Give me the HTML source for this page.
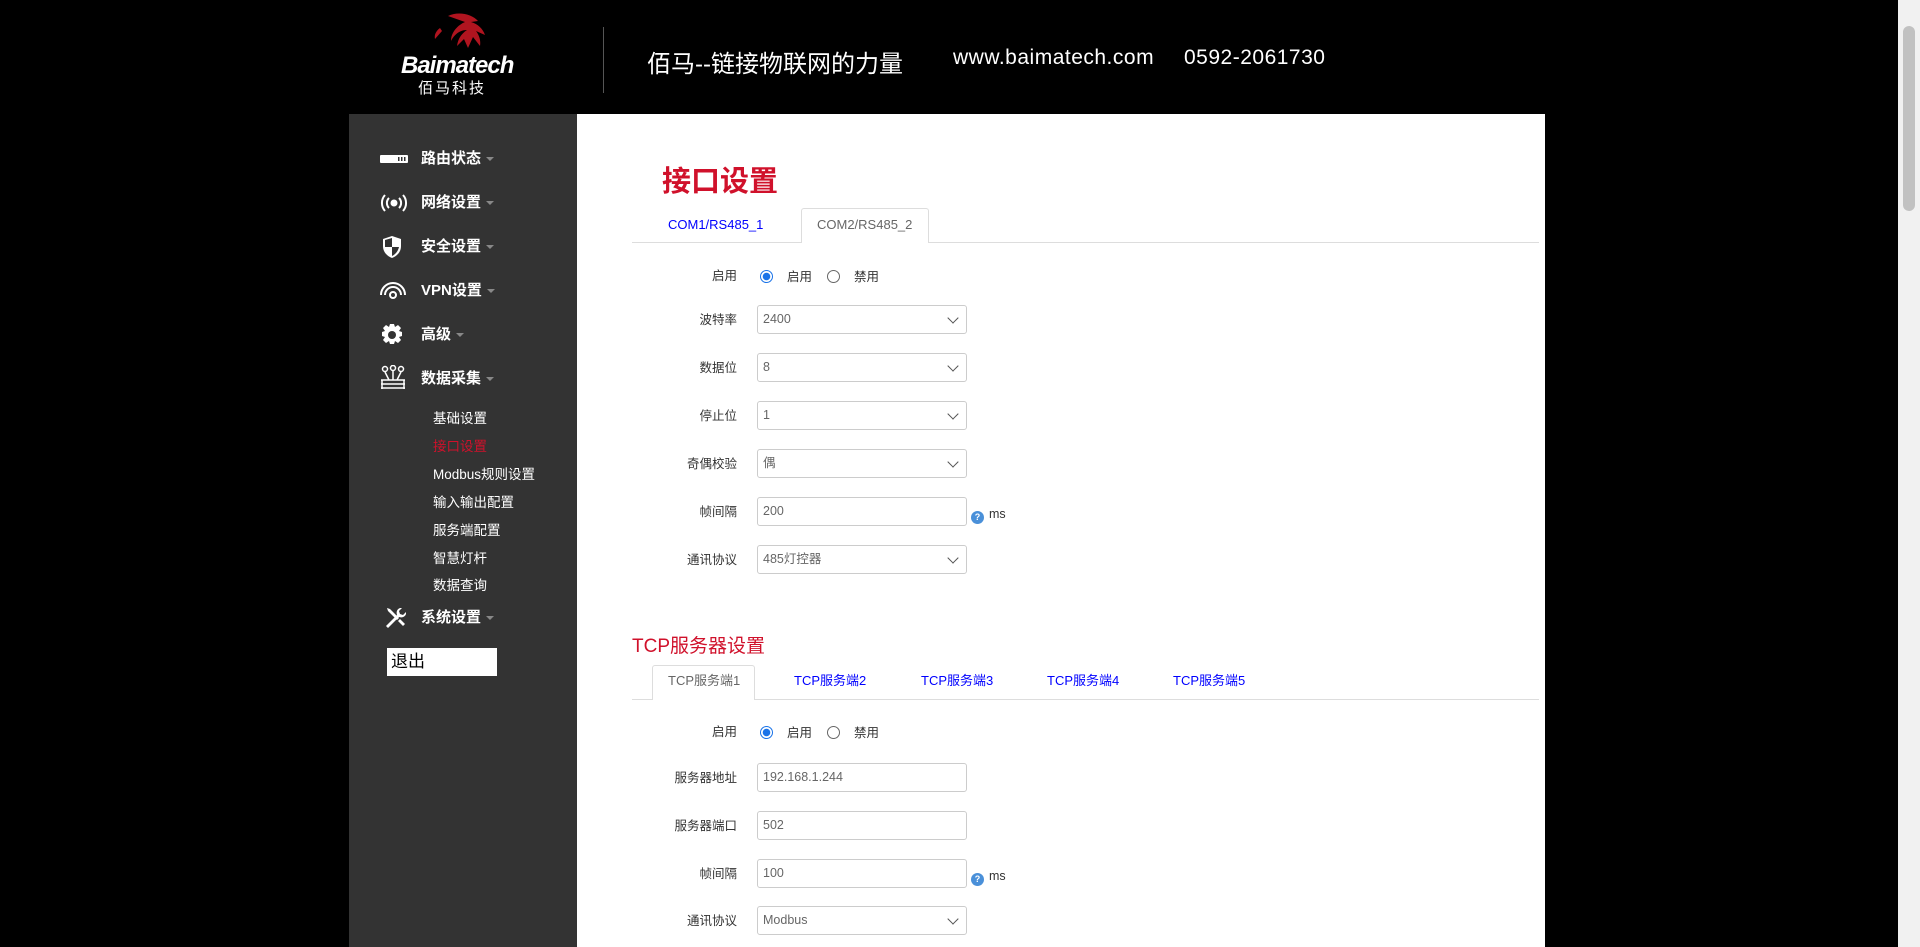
<!DOCTYPE html>
<html><head><meta charset="utf-8"><style>
*{margin:0;padding:0;box-sizing:border-box}
body{width:1920px;height:947px;background:#000;position:relative;overflow:hidden;font-family:"Liberation Sans","Noto Sans CJK SC",sans-serif}
.a{position:absolute;white-space:nowrap}
#side{position:absolute;left:349px;top:114px;width:228px;height:833px;background:#333}
#main{position:absolute;left:577px;top:114px;width:968px;height:833px;background:#fff}
.mi{position:absolute;left:421px;color:#fff;font-weight:bold;font-size:15px;line-height:20px}
.mi:after{content:"";display:inline-block;margin-left:5px;vertical-align:middle;border-left:4px solid transparent;border-right:4px solid transparent;border-top:4px solid #888}
.ic{position:absolute;left:380px}
.sub{position:absolute;left:433px;color:#fff;font-size:13.5px;line-height:18px}
.lbl{position:absolute;right:1183px;font-size:12.5px;color:#333;line-height:16px}
.inp{position:absolute;left:757px;width:210px;height:29px;border:1px solid #ccc;border-radius:3px;font-size:12.5px;color:#666;padding-left:5px;line-height:27px}
.sel:after{content:"";position:absolute;right:9px;top:8px;width:7px;height:7px;border-right:1.8px solid #555;border-bottom:1.8px solid #555;transform:rotate(45deg)}
.rad{position:absolute;left:760px;font-size:12.5px;color:#333;line-height:16px}
.r{display:inline-block;width:13px;height:13px;border-radius:50%;border:1px solid #666;vertical-align:-2px;margin-right:14px}
.r.on{border:1.5px solid #1a73e8;background:radial-gradient(circle,#1a73e8 0 3.5px,#fff 4px)}
.g{display:inline-block;width:15px}
.hint{position:absolute;left:971px;font-size:12.5px;color:#333;line-height:16px}
.q{display:inline-block;width:13px;height:13px;border-radius:50%;background:#4a90d9;color:#fff;font-size:9px;text-align:center;line-height:13px;font-weight:bold;vertical-align:-2px;margin-right:5px}
.tl{position:absolute;font-size:13px;color:#00f;line-height:16px}
</style></head><body>
<!-- header -->
<svg class="a" style="left:418px;top:12px" width="90" height="44" viewBox="0 0 90 44"><path d="M30 4c10-5 24-2 30 5l-7 1c7 2 12 7 14 13l-9-4c3 4 5 9 4 15l-7-9-5 11-4-9-7 7c1-7 4-12 10-16-9 0-14 7-16 11 0-9 7-16 14-19z" fill="#b0141f"/><path d="M22 16c-4 3-6 7-5 11l7-8z" fill="#b0141f"/></svg>
<div class="a" style="left:401px;top:52px;color:#fff;font-size:24px;font-style:italic;font-weight:bold;letter-spacing:-1px">Baimatech</div>
<div class="a" style="left:418px;top:77px;color:#fff;font-size:15px;letter-spacing:2px">佰马科技</div>
<div class="a" style="left:603px;top:27px;width:1px;height:66px;background:#555"></div>
<div class="a" style="left:647px;top:44px;color:#fff;font-size:24px">佰马--链接物联网的力量</div>
<div class="a" style="left:953px;top:46px;color:#fff;font-size:21px;letter-spacing:0.5px">www.baimatech.com</div>
<div class="a" style="left:1184px;top:46px;color:#fff;font-size:21px;letter-spacing:0.5px">0592-2061730</div>
<div class="a" style="left:1898px;top:0;width:22px;height:947px;background:#f1f1f1"></div>
<div class="a" style="left:1903px;top:26px;width:12px;height:185px;background:#c1c1c1;border-radius:6px"></div>
<div id="side"></div>
<div id="main"></div>
<!-- sidebar -->
<svg class="ic" style="top:154px" width="28" height="10"><rect x="0" y="1" width="28" height="8" rx="1" fill="#fff"/><rect x="18" y="3" width="1.5" height="4" fill="#333"/><rect x="21" y="3" width="1.5" height="4" fill="#333"/><rect x="24" y="3" width="1.5" height="4" fill="#333"/></svg>
<div class="mi" style="top:149px">路由状态</div>
<svg class="ic" style="top:194px" width="28" height="18" fill="none" stroke="#fff" stroke-width="2"><circle cx="14" cy="9" r="2.5" fill="#fff"/><path d="M9 4a7 7 0 0 0 0 10M19 4a7 7 0 0 1 0 10M5 1a12 12 0 0 0 0 16M23 1a12 12 0 0 1 0 16"/></svg>
<div class="mi" style="top:193px">网络设置</div>
<svg class="ic" style="top:235px" width="24" height="24"><path d="M12 1l9 3v7c0 6-4 10-9 12C7 21 3 17 3 11V4z" fill="#fff"/><path d="M12 3v9H5V5zM12 12h7c-1 4-3 7-7 9z" fill="#333"/></svg>
<div class="mi" style="top:237px">安全设置</div>
<svg class="ic" style="top:281px" width="26" height="20" fill="none" stroke="#fff" stroke-width="2"><circle cx="13" cy="14" r="3"/><path d="M5 14a8 8 0 0 1 16 0M1 14a12 12 0 0 1 24 0"/></svg>
<div class="mi" style="top:281px">VPN设置</div>
<svg class="ic" style="top:323px" width="24" height="24" viewBox="0 0 24 24"><path fill="#fff" d="M10 1h4l1 3 3-2 3 3-2 3 3 1v4l-3 1 2 3-3 3-3-2-1 3h-4l-1-3-3 2-3-3 2-3-3-1v-4l3-1-2-3 3-3 3 2z"/><circle cx="12" cy="12" r="4" fill="#333"/></svg>
<div class="mi" style="top:325px">高级</div>
<svg class="ic" style="top:365px" width="26" height="26" fill="none" stroke="#fff" stroke-width="1.5"><circle cx="5" cy="4" r="2.5"/><circle cx="13" cy="3" r="2.5"/><circle cx="21" cy="4" r="2.5"/><path d="M5 7l4 8M13 6v9M21 7l-4 8M1 15h24M1 19h24M1 23h24M2 15v9M24 15v9"/></svg>
<div class="mi" style="top:369px">数据采集</div>
<div class="sub" style="top:410px">基础设置</div>
<div class="sub" style="top:438px;color:#d0112b">接口设置</div>
<div class="sub" style="top:466px">Modbus规则设置</div>
<div class="sub" style="top:494px">输入输出配置</div>
<div class="sub" style="top:522px">服务端配置</div>
<div class="sub" style="top:550px">智慧灯杆</div>
<div class="sub" style="top:577px">数据查询</div>
<svg class="ic" style="top:606px;left:383px" width="24" height="24" viewBox="0 0 24 24" fill="#fff"><path d="M3 20l11-11c-1-3 0-6 3-7l2 0-3 3 1 3 3 1 3-3 0 2c-1 3-4 4-7 3L5 22z"/><path d="M4 2l3 1 9 9-2 2-9-9z"/><path d="M15 15l2-2 5 5-2 2z"/></svg>
<div class="mi" style="top:608px">系统设置</div>
<div class="a" style="left:387px;top:648px;width:110px;height:28px;background:#fff;color:#000;font-size:17px;line-height:28px;padding-left:4px">退出</div>
<!-- content -->
<div class="a" style="left:662px;top:158px;color:#d0112b;font-size:29px;font-weight:bold">接口设置</div>
<div class="a" style="left:632px;top:242px;width:907px;height:1px;background:#ddd"></div>
<div class="a" style="left:801px;top:208px;width:128px;height:35px;background:#fff;border:1px solid #ddd;border-bottom:none;border-radius:3px 3px 0 0"></div>
<div class="tl" style="left:668px;top:217px">COM1/RS485_1</div>
<div class="tl" style="left:817px;top:217px;color:#666">COM2/RS485_2</div>
<div class="lbl" style="top:268px">启用</div>
<div class="rad" style="top:269px"><span class="r on"></span>启用<span class="g"></span><span class="r"></span>禁用</div>
<div class="lbl" style="top:312px">波特率</div><div class="inp sel" style="top:305px">2400</div>
<div class="lbl" style="top:360px">数据位</div><div class="inp sel" style="top:353px">8</div>
<div class="lbl" style="top:408px">停止位</div><div class="inp sel" style="top:401px">1</div>
<div class="lbl" style="top:456px">奇偶校验</div><div class="inp sel" style="top:449px">偶</div>
<div class="lbl" style="top:504px">帧间隔</div><div class="inp" style="top:497px">200</div><div class="hint" style="top:506px"><span class="q">?</span>ms</div>
<div class="lbl" style="top:552px">通讯协议</div><div class="inp sel" style="top:545px">485灯控器</div>
<div class="a" style="left:632px;top:631px;color:#d0112b;font-size:19px">TCP服务器设置</div>
<div class="a" style="left:632px;top:699px;width:907px;height:1px;background:#ddd"></div>
<div class="a" style="left:652px;top:665px;width:103px;height:35px;background:#fff;border:1px solid #ddd;border-bottom:none;border-radius:3px 3px 0 0"></div>
<div class="tl" style="left:668px;top:673px;color:#666">TCP服务端1</div>
<div class="tl" style="left:794px;top:673px">TCP服务端2</div>
<div class="tl" style="left:921px;top:673px">TCP服务端3</div>
<div class="tl" style="left:1047px;top:673px">TCP服务端4</div>
<div class="tl" style="left:1173px;top:673px">TCP服务端5</div>
<div class="lbl" style="top:724px">启用</div>
<div class="rad" style="top:725px"><span class="r on"></span>启用<span class="g"></span><span class="r"></span>禁用</div>
<div class="lbl" style="top:770px">服务器地址</div><div class="inp" style="top:763px">192.168.1.244</div>
<div class="lbl" style="top:818px">服务器端口</div><div class="inp" style="top:811px">502</div>
<div class="lbl" style="top:866px">帧间隔</div><div class="inp" style="top:859px">100</div><div class="hint" style="top:868px"><span class="q">?</span>ms</div>
<div class="lbl" style="top:913px">通讯协议</div><div class="inp sel" style="top:906px">Modbus</div>
</body></html>
